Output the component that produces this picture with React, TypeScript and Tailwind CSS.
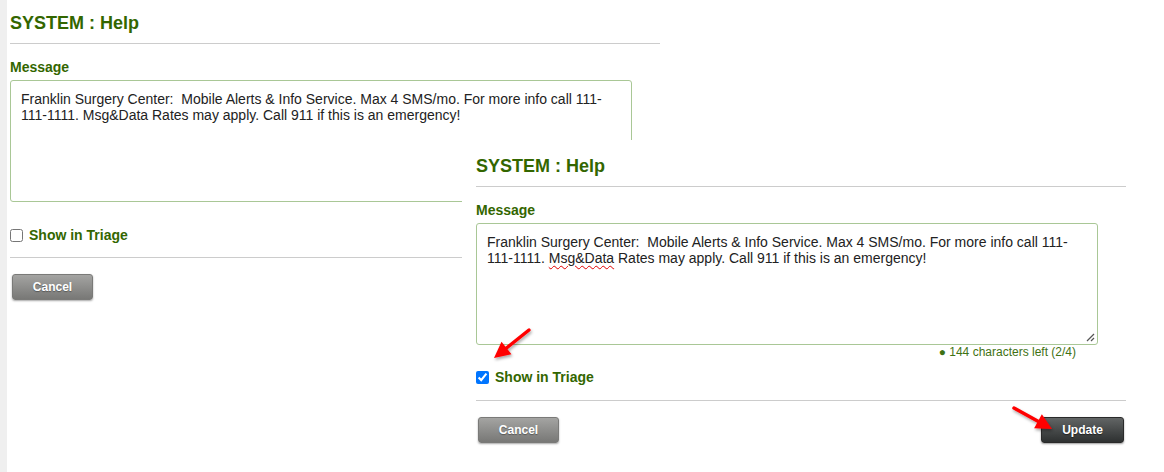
const green = "text-[#336600]";
const before = "Franklin Surgery Center:  Mobile Alerts & Info Service. Max 4 SMS/mo. For more info call 111-111-1111. ";
const after = " Rates may apply. Call 911 if this is an emergency!";

function Arrow({ x1, y1, x2, y2 }: { x1: number; y1: number; x2: number; y2: number }) {
  const ang = Math.atan2(y2 - y1, x2 - x1);
  const len = 16;
  const w = 8;
  const bx = x2 - len * Math.cos(ang);
  const by = y2 - len * Math.sin(ang);
  const px = -Math.sin(ang) * w;
  const py = Math.cos(ang) * w;
  return (
    <g>
      <line x1={x1} y1={y1} x2={bx} y2={by} stroke="#ff0000" strokeWidth="3.5" strokeLinecap="round" />
      <polygon points={`${x2},${y2} ${bx + px},${by + py} ${bx - px},${by - py}`} fill="#ff0000" />
    </g>
  );
}

function Button({ label, dark }: { label: string; dark?: boolean }) {
  return (
    <button
      type="button"
      className={
        dark
          ? "flex h-[26px] w-[83px] items-center justify-center rounded-[3px] border border-[#2a2a2a] bg-gradient-to-b from-[#626565] to-[#2e3131] text-[12px] font-bold text-white shadow-[0_1px_2px_rgba(0,0,0,0.4)] [text-shadow:0_1px_1px_rgba(0,0,0,0.5)]"
          : "flex h-[26px] w-[81px] items-center justify-center rounded-[3px] border border-[#7a7a78] bg-gradient-to-b from-[#a4a4a2] to-[#787876] text-[12px] font-bold text-white shadow-[0_1px_2px_rgba(0,0,0,0.35)] [text-shadow:0_1px_1px_rgba(0,0,0,0.35)]"
      }
    >
      {label}
    </button>
  );
}

function Panel({ edited }: { edited?: boolean }) {
  return (
    <div className="flex w-[650px] flex-col">
      <h2 className={`text-[18px] leading-[21px] font-bold ${green}`}>SYSTEM : Help</h2>
      <div className="mt-[9px] border-t border-[#cccccc]" />
      <div className={`mt-[15px] text-[14px] leading-[16px] font-bold ${green}`}>Message</div>
      <div className="relative mt-[5px] h-[122px] w-[622px] rounded-[3px] border border-[#a9c796] bg-white px-[10px] pt-[10px] text-[14px] leading-[16px] whitespace-pre-wrap text-[#222222]">
        {edited ? (
          <>
            {before}
            <span className="underline decoration-[#e00000] decoration-wavy decoration-1 underline-offset-2">Msg&amp;Data</span>
            {after}
            <svg className="absolute right-[2px] bottom-[2px]" width="10" height="10" viewBox="0 0 10 10">
              <line x1="2" y1="9" x2="9" y2="2" stroke="#555" strokeWidth="1.2" />
              <line x1="6" y1="9" x2="9" y2="6" stroke="#555" strokeWidth="1.2" />
            </svg>
          </>
        ) : (
          before + "Msg&Data" + after
        )}
      </div>
      {edited && (
        <div className={`w-[622px] pr-[22px] text-right text-[12px] leading-[14px] text-[#3f7214]`}>● 144 characters left (2/4)</div>
      )}
      <label className={`${edited ? "mt-[10px]" : "mt-[25px]"} flex h-[16px] items-center gap-[6px]`}>
        <input type="checkbox" readOnly checked={!!edited} className="m-0 h-[13px] w-[13px]" />
        <span className={`text-[14px] font-bold ${green}`}>Show in Triage</span>
      </label>
      <div className={`${edited ? "mt-[15px]" : "mt-[14px]"} border-t border-[#cccccc]`} />
      <div className="mt-[16px] flex items-center justify-between px-[2px]">
        <Button label="Cancel" />
        {edited && <Button label="Update" dark />}
      </div>
    </div>
  );
}

export default function App() {
  return (
    <div className="relative flex h-[472px] w-[1164px] overflow-hidden bg-white font-['Liberation_Sans',Arial,sans-serif]">
      <div className="w-[7px] shrink-0 bg-[#efefef]" />
      <div className="pt-[13px] pl-[3px]">
        <Panel />
      </div>
      <div className="absolute top-[140px] left-[462px] h-[332px] w-[702px] bg-white pt-[16px] pl-[14px]">
        <Panel edited />
      </div>
      <svg className="pointer-events-none absolute top-0 left-0" width="1164" height="472">
        <defs>
          <filter id="sh" x="-20%" y="-20%" width="140%" height="140%">
            <feDropShadow dx="1" dy="2" stdDeviation="1.5" floodColor="#000" floodOpacity="0.35" />
          </filter>
        </defs>
        <g filter="url(#sh)">
          <Arrow x1={529} y1={330} x2={494} y2={358} />
          <Arrow x1={1014} y1={408} x2={1052} y2={429} />
        </g>
      </svg>
    </div>
  );
}
